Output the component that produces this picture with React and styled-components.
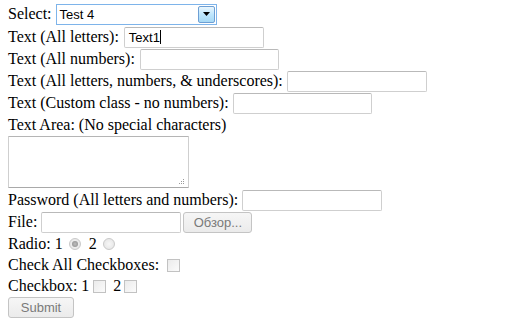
import React from "react";
import styled, { createGlobalStyle } from "styled-components";

const Global = createGlobalStyle`
    html, body {
        margin: 0;
        background: #fff;
    }
    body {
        font-family: "Liberation Serif", "Times New Roman", serif;
        font-size: 16px;
        color: #000;
    }
`;

const App = () => {
    return (
        <>
            <Global />
            <Form>
                <Row $height={24}>
                    {"Select:"}
                    <Select>
                        <SelectValue>{"Test 4"}</SelectValue>
                        <SelectArrow>
                            <svg width="7" height="4" viewBox="0 0 7 4">
                                <path d="M0 0h7L3.5 4z" fill="#000" />
                            </svg>
                        </SelectArrow>
                    </Select>
                </Row>
                <Row>
                    {"Text (All letters):"}
                    <Field $width={140} $left={5}>
                        {"Text1"}
                        <Caret />
                    </Field>
                </Row>
                <Row>
                    {"Text (All numbers):"}
                    <Field $width={139} $left={5} />
                </Row>
                <Row>
                    {"Text (All letters, numbers, & underscores):"}
                    <Field $width={140} />
                </Row>
                <Row>
                    {"Text (Custom class - no numbers):"}
                    <Field $width={139} />
                </Row>
                <Row>{"Text Area: (No special characters)"}</Row>
                <AreaRow>
                    <TextArea>
                        <Grip>
                            <svg width="7" height="7" viewBox="0 0 7 7">
                                <rect x="5" y="1" width="1" height="1" fill="#9a9a9a" />
                                <rect x="3" y="3" width="1" height="1" fill="#9a9a9a" />
                                <rect x="5" y="3" width="1" height="1" fill="#9a9a9a" />
                                <rect x="1" y="5" width="1" height="1" fill="#9a9a9a" />
                                <rect x="3" y="5" width="1" height="1" fill="#9a9a9a" />
                                <rect x="5" y="5" width="1" height="1" fill="#9a9a9a" />
                            </svg>
                        </Grip>
                    </TextArea>
                </AreaRow>
                <Row>
                    {"Password (All letters and numbers):"}
                    <Field $width={140} />
                </Row>
                <Row>
                    {"File:"}
                    <Field $width={140} />
                    <GrayButton $width={69}>{"Обзор..."}</GrayButton>
                </Row>
                <Row $height={21}>
                    {"Radio: 1"}
                    <Radio $checked />
                    {"2"}
                    <Radio />
                </Row>
                <Row $height={21}>
                    {"Check All Checkboxes:"}
                    <Check $left={8} />
                </Row>
                <Row $height={21}>
                    {"Checkbox: 1"}
                    <Check $left={4} $right={7} />
                    {"2"}
                    <Check $left={3} />
                </Row>
                <SubmitRow>
                    <GrayButton $width={66} $gap={0}>{"Submit"}</GrayButton>
                </SubmitRow>
            </Form>
        </>
    );
};

export default App;

const Form = styled.form`
    display: flex;
    flex-direction: column;
    padding: 2px 8px 0;
`;

const Row = styled.div`
    display: flex;
    align-items: center;
    height: ${(p) => p.$height || 22}px;
    white-space: pre;
`;

const AreaRow = styled.div`
    display: flex;
    padding: 0 0 1px;
`;

const SubmitRow = styled.div`
    display: flex;
    padding-top: 1px;
`;

const Select = styled.div`
    display: flex;
    align-items: stretch;
    box-sizing: border-box;
    width: 161px;
    height: 21px;
    margin-left: 4px;
    border: 1px solid #7eb4ea;
    background: #fff;
`;

const SelectValue = styled.div`
    flex: 1;
    display: flex;
    align-items: center;
    padding-left: 3px;
    font-family: "Liberation Sans", Arial, sans-serif;
    font-size: 13px;
`;

const SelectArrow = styled.div`
    display: flex;
    align-items: center;
    justify-content: center;
    width: 15px;
    margin: 1px;
    border: 1px solid #6e9fd4;
    border-radius: 2px;
    background: linear-gradient(#eaf6fd, #bee6fd 50%, #a7d9f5);
`;

const Field = styled.div`
    position: relative;
    display: flex;
    align-items: center;
    box-sizing: border-box;
    width: ${(p) => p.$width}px;
    height: 21px;
    margin-left: ${(p) => p.$left || 4}px;
    padding-left: 4px;
    border: 1px solid #cfcfcf;
    border-top-color: #b9b9b9;
    border-radius: 2px;
    background: #fff;
    font-family: "Liberation Sans", Arial, sans-serif;
    font-size: 13px;
`;

const Caret = styled.span`
    display: inline-block;
    width: 1px;
    height: 14px;
    background: #000;
`;

const TextArea = styled.div`
    position: relative;
    box-sizing: border-box;
    width: 181px;
    height: 52px;
    border: 1px solid #a9a9a9;
    border-color: #b5b5b5 #cfcfcf #a9a9a9;
    border-radius: 1px;
    background: #fff;
`;

const Grip = styled.div`
    position: absolute;
    right: 3px;
    bottom: 2px;
    line-height: 0;
`;

const GrayButton = styled.div`
    display: flex;
    align-items: center;
    justify-content: center;
    box-sizing: border-box;
    width: ${(p) => p.$width}px;
    height: 21px;
    margin-left: ${(p) => (p.$gap === undefined ? 2 : p.$gap)}px;
    border: 1px solid #c4c4c4;
    border-radius: 3px;
    background: linear-gradient(#f6f6f6, #ebebeb);
    color: #7a7a7a;
    font-family: "Liberation Sans", Arial, sans-serif;
    font-size: 13px;
`;

const Radio = styled.span`
    position: relative;
    box-sizing: border-box;
    width: 12px;
    height: 12px;
    margin: 1px 8px 0 6px;
    border: 1px solid #c9c9c9;
    border-radius: 50%;
    background: radial-gradient(#f7f7f7, #e2e2e2);

    &::after {
        content: "";
        position: absolute;
        left: 2px;
        top: 2px;
        width: 6px;
        height: 6px;
        border-radius: 50%;
        background: ${(p) => (p.$checked ? "radial-gradient(#bdbdbd, #8a8a8a)" : "transparent")};
    }
`;

const Check = styled.span`
    box-sizing: border-box;
    width: 13px;
    height: 13px;
    margin: 1px ${(p) => p.$right || 3}px 0 ${(p) => p.$left}px;
    border: 1px solid #c2c2c2;
    background: linear-gradient(135deg, #ebebeb, #fbfbfb);
`;
